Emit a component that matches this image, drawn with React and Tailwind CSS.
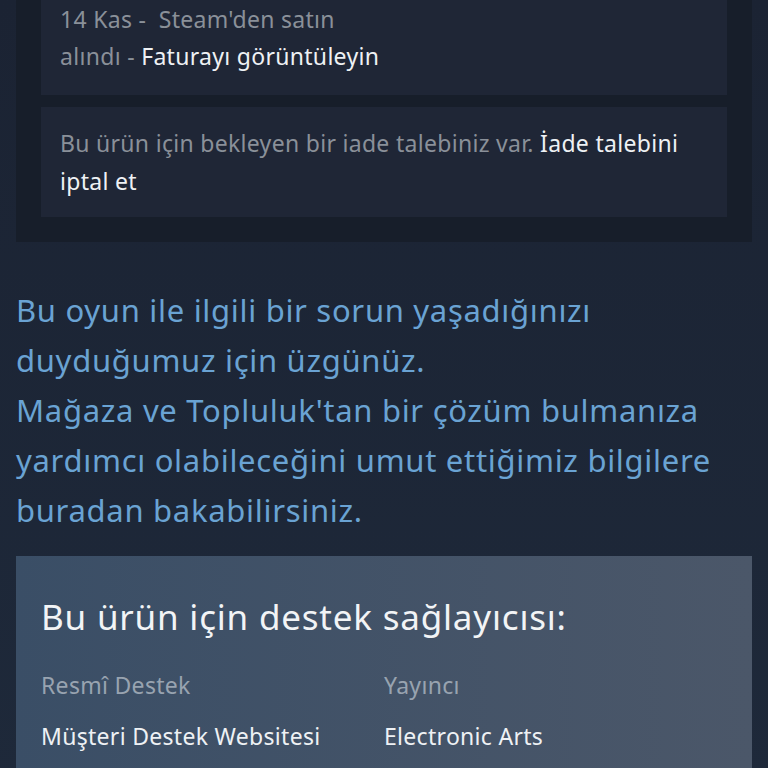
export default function App() {
  return (
    <div className="min-h-[768px] bg-gradient-to-b from-[#1b2333] to-[#1e293a] font-['Noto_Sans','Open_Sans',sans-serif] overflow-hidden">
      <div className="mx-4 bg-[#171e2a] px-[25px] pb-[25px]">
        <div className="bg-[#1f2636] px-[19px] pt-[1px] pb-[20px] text-[23px] tracking-[0.3px] leading-[37px] text-[#8a9099] whitespace-nowrap">
          <div>14 Kas - &nbsp;Steam'den satın</div>
          <div>alındı - <span className="text-[#eef1f4]">Faturayı görüntüleyin</span></div>
        </div>
        <div className="mt-3 bg-[#1f2636] px-[19px] py-[17px] text-[23px] tracking-[0.3px] leading-[38px] text-[#8a9099]">
          <div className="whitespace-nowrap">
            Bu ürün için bekleyen bir iade talebiniz var. <span className="text-[#eef1f4]">İade talebini</span>
          </div>
          <div className="text-[#eef1f4]">iptal et</div>
        </div>
      </div>

      <div className="mx-4 mt-[43px] text-[31px] tracking-[0.7px] leading-[50px] text-[#6aa3d3] whitespace-nowrap">
        <div>Bu oyun ile ilgili bir sorun yaşadığınızı</div>
        <div>duyduğumuz için üzgünüz.</div>
        <div>Mağaza ve Topluluk'tan bir çözüm bulmanıza</div>
        <div>yardımcı olabileceğini umut ettiğimiz bilgilere</div>
        <div>buradan bakabilirsiniz.</div>
      </div>

      <div className="mx-4 mt-[21px] bg-gradient-to-r from-[#3a4e66] to-[#4b5769] px-[25px] pt-[38px] pb-10">
        <div className="text-[35px] tracking-[0.8px] leading-[46px] text-[#f2f4f6]">Bu ürün için destek sağlayıcısı:</div>
        <div className="mt-[30px] grid grid-cols-[343px_1fr] text-[23px] tracking-[0.3px] leading-[30px]">
          <div className="text-[#98a3b0]">Resmî Destek</div>
          <div className="text-[#98a3b0]">Yayıncı</div>
          <div className="mt-[21px] text-[#eef1f4]">Müşteri Destek Websitesi</div>
          <div className="mt-[21px] text-[#eef1f4]">Electronic Arts</div>
        </div>
      </div>
    </div>
  )
}
